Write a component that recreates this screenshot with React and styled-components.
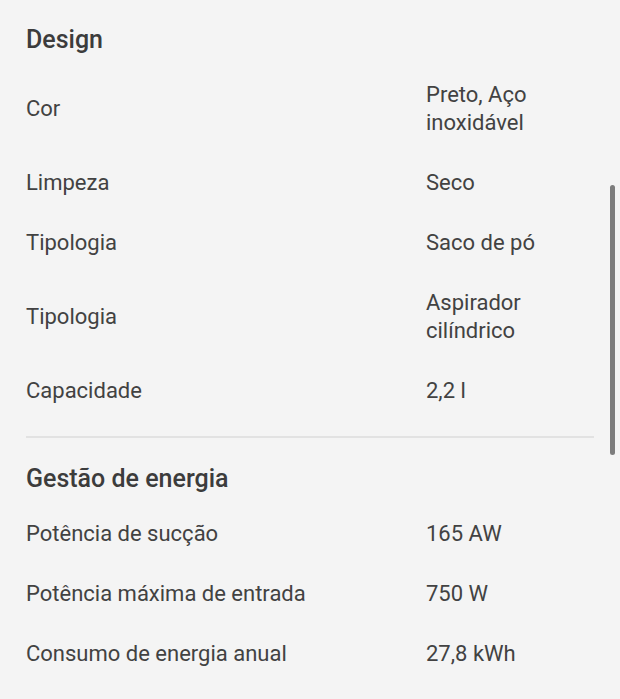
import React from 'react';
import styled, { createGlobalStyle } from 'styled-components';

const specs = [
  {
    title: 'Design',
    rows: [
      ['Cor', 'Preto, Aço inoxidável'],
      ['Limpeza', 'Seco'],
      ['Tipologia', 'Saco de pó'],
      ['Tipologia', 'Aspirador cilíndrico'],
      ['Capacidade', '2,2 l'],
    ],
  },
  {
    title: 'Gestão de energia',
    rows: [
      ['Potência de sucção', '165 AW'],
      ['Potência máxima de entrada', '750 W'],
      ['Consumo de energia anual', '27,8 kWh'],
    ],
  },
];

const App = () => (
  <>
    <GlobalStyle />
    <Page>
      {specs.map((section, i) => (
        <Section key={section.title} last={i === specs.length - 1}>
          <Heading>{section.title}</Heading>
          {section.rows.map(([label, value], j) => (
            <Row key={j}>
              <Label>{label}</Label>
              <Value>{value}</Value>
            </Row>
          ))}
        </Section>
      ))}
      <Thumb />
    </Page>
  </>
);

const GlobalStyle = createGlobalStyle`
  html, body {
    margin: 0;
    background: #f4f4f4;
  }
  body {
    font-family: Roboto, "Liberation Sans", sans-serif;
    color: #404040;
  }
`;

const Page = styled.div`
  position: relative;
  width: 620px;
  height: 699px;
  overflow: hidden;
  background: #f4f4f4;
  padding: 0 26px;
  box-sizing: border-box;
`;

const Section = styled.section`
  padding-top: ${(p) => (p.last ? '27px' : '26px')};
  padding-bottom: 15px;
  border-bottom: ${(p) => (p.last ? 'none' : '2px solid #e2e2e2')};
`;

const Heading = styled.h2`
  margin: 0 0 11px;
  font-size: 25px;
  font-weight: 500;
  line-height: 28px;
  color: #3c3c3c;
`;

const Row = styled.div`
  display: grid;
  grid-template-columns: 400px 168px;
  align-items: center;
  padding: 16px 0;
  font-size: 22px;
  line-height: 28px;
`;

const Label = styled.div`
  color: #424242;
`;

const Value = styled.div`
  color: #424242;
`;

const Thumb = styled.div`
  position: absolute;
  top: 185px;
  left: 610px;
  width: 5px;
  height: 270px;
  border-radius: 3px;
  background: #7d7d7d;
`;

export default App;
